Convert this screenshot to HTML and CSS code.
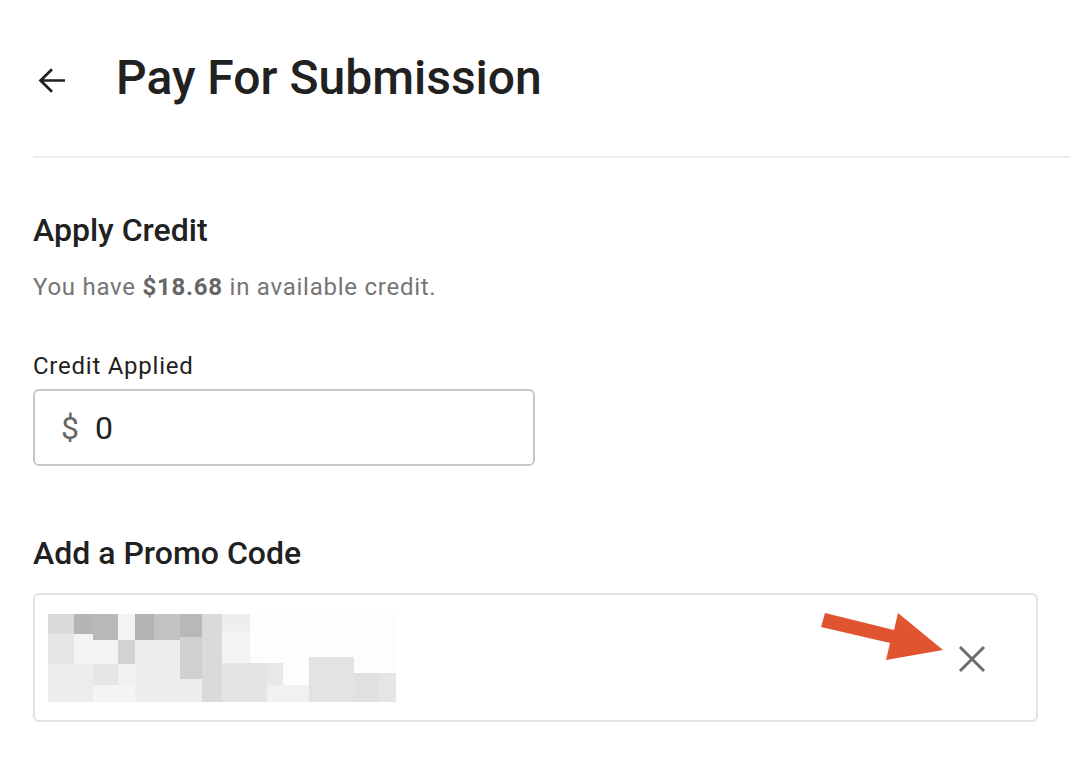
FILE: index.html
```html
<!DOCTYPE html>
<html>
<head>
<meta charset="utf-8">
<link rel="stylesheet" href="styles.css">
</head>
<body>
<div class="page">
  <header class="header">
    <svg class="back" width="36" height="36" viewBox="0 0 36 36"><path d="M8.5 20.5H33M20 9.2L8.5 20.5L20 31.8" stroke="#212121" stroke-width="2.7" fill="none" stroke-linejoin="miter"/></svg>
    <h1 class="title">Pay For Submission</h1>
  </header>
  <div class="divider"></div>
  <section class="credit">
    <h2 class="section-title">Apply Credit</h2>
    <p class="note">You have <b>$18.68</b> in available credit.</p>
    <label class="field-label">Credit Applied</label>
    <div class="input">
      <span class="prefix">$</span>
      <span class="value">0</span>
    </div>
  </section>
  <section class="promo">
    <h2 class="section-title">Add a Promo Code</h2>
    <div class="promo-box">
      <svg class="mosaic" width="348" height="88" viewBox="48 612 348 88">
        <rect x="48" y="612" width="348" height="88" fill="#fdfdfd"/>
        <rect x="48" y="612" width="26" height="20" fill="#d9d9d9"/>
        <rect x="74" y="612" width="19" height="20" fill="#b5b5b5"/>
        <rect x="93" y="612" width="25" height="26" fill="#b8b8b8"/>
        <rect x="118" y="612" width="17" height="26" fill="#f3f3f3"/>
        <rect x="135" y="612" width="19" height="26" fill="#b3b3b3"/>
        <rect x="154" y="612" width="26" height="26" fill="#c2c2c2"/>
        <rect x="180" y="612" width="22" height="23" fill="#b8b8b8"/>
        <rect x="202" y="612" width="20" height="88" fill="#dadada"/>
        <rect x="222" y="612" width="28" height="17" fill="#eeeeee"/>
        <rect x="222" y="629" width="28" height="32" fill="#f3f3f3"/>
        <rect x="48" y="632" width="26" height="30" fill="#e6e6e6"/>
        <rect x="74" y="632" width="19" height="30" fill="#f4f4f4"/>
        <rect x="93" y="638" width="25" height="24" fill="#f4f4f4"/>
        <rect x="118" y="638" width="17" height="24" fill="#d3d3d3"/>
        <rect x="135" y="638" width="45" height="39" fill="#eeeeee"/>
        <rect x="180" y="635" width="22" height="42" fill="#d0d0d0"/>
        <rect x="48" y="662" width="45" height="38" fill="#ececec"/>
        <rect x="93" y="662" width="25" height="21" fill="#e6e6e6"/>
        <rect x="93" y="683" width="42" height="17" fill="#f4f4f4"/>
        <rect x="118" y="662" width="17" height="21" fill="#f1f1f1"/>
        <rect x="135" y="677" width="67" height="23" fill="#eeeeee"/>
        <rect x="222" y="661" width="45" height="39" fill="#e4e4e4"/>
        <rect x="267" y="661" width="16" height="22" fill="#e8e8e8"/>
        <rect x="267" y="683" width="42" height="17" fill="#f1f1f1"/>
        <rect x="309" y="655" width="45" height="45" fill="#e3e3e3"/>
        <rect x="354" y="671" width="25" height="29" fill="#e0e0e0"/>
        <rect x="379" y="671" width="17" height="29" fill="#e5e5e5"/>
      </svg>
      <svg class="clear" width="30" height="30" viewBox="0 0 30 30"><path d="M3 3L27 27M27 3L3 27" stroke="#6b6b6b" stroke-width="3" fill="none"/></svg>
      <svg class="pointer" width="130" height="52" viewBox="818 610 130 52"><polygon points="825,613 894,630 898,613 943,650 886,660 890,643 821,627" fill="#e05530"/></svg>
    </div>
  </section>
</div>
</body>
</html>
```
FILE: styles.css
```css
* { box-sizing: border-box; }
html, body { margin: 0; padding: 0; background: #fff; }
body { font-family: Roboto, "Liberation Sans", sans-serif; color: #212121; width: 1070px; height: 770px; overflow: hidden; }
.page { padding-left: 33px; }
.header { display: flex; align-items: center; height: 156px; margin-left: -1px; }
.back { display: block; margin-right: 48px; }
.title { margin: 0; font-size: 48px; font-weight: 500; letter-spacing: 0; line-height: 48px; }
.divider { height: 2px; background: #ececec; }
.credit { padding-top: 54px; }
.section-title { margin: 0; font-size: 32px; font-weight: 500; line-height: 36px; }
.note { margin: 25px 0 0; font-size: 24px; color: #757575; letter-spacing: 0.75px; line-height: 28px; }
.note b { color: #666; font-weight: 700; }
.field-label { display: block; margin-top: 51px; font-size: 24px; letter-spacing: 0.75px; line-height: 28px; color: #222; }
.input { margin-top: 9px; width: 502px; height: 77px; border: 2px solid #c6c6c6; border-radius: 6px; display: flex; align-items: center; padding-left: 26px; font-size: 32px; }
.prefix { color: #666; margin-right: 16px; }
.value { color: #222; }
.promo { padding-top: 69px; }
.promo-box { position: relative; margin-top: 22px; width: 1005px; height: 129px; border: 2px solid #e2e2e2; border-radius: 6px; display: flex; align-items: center; padding-left: 13px; }
.mosaic { display: block; }
.clear { position: absolute; left: 922px; top: 49px; }
.pointer { position: absolute; left: 783px; top: 15px; }
```
